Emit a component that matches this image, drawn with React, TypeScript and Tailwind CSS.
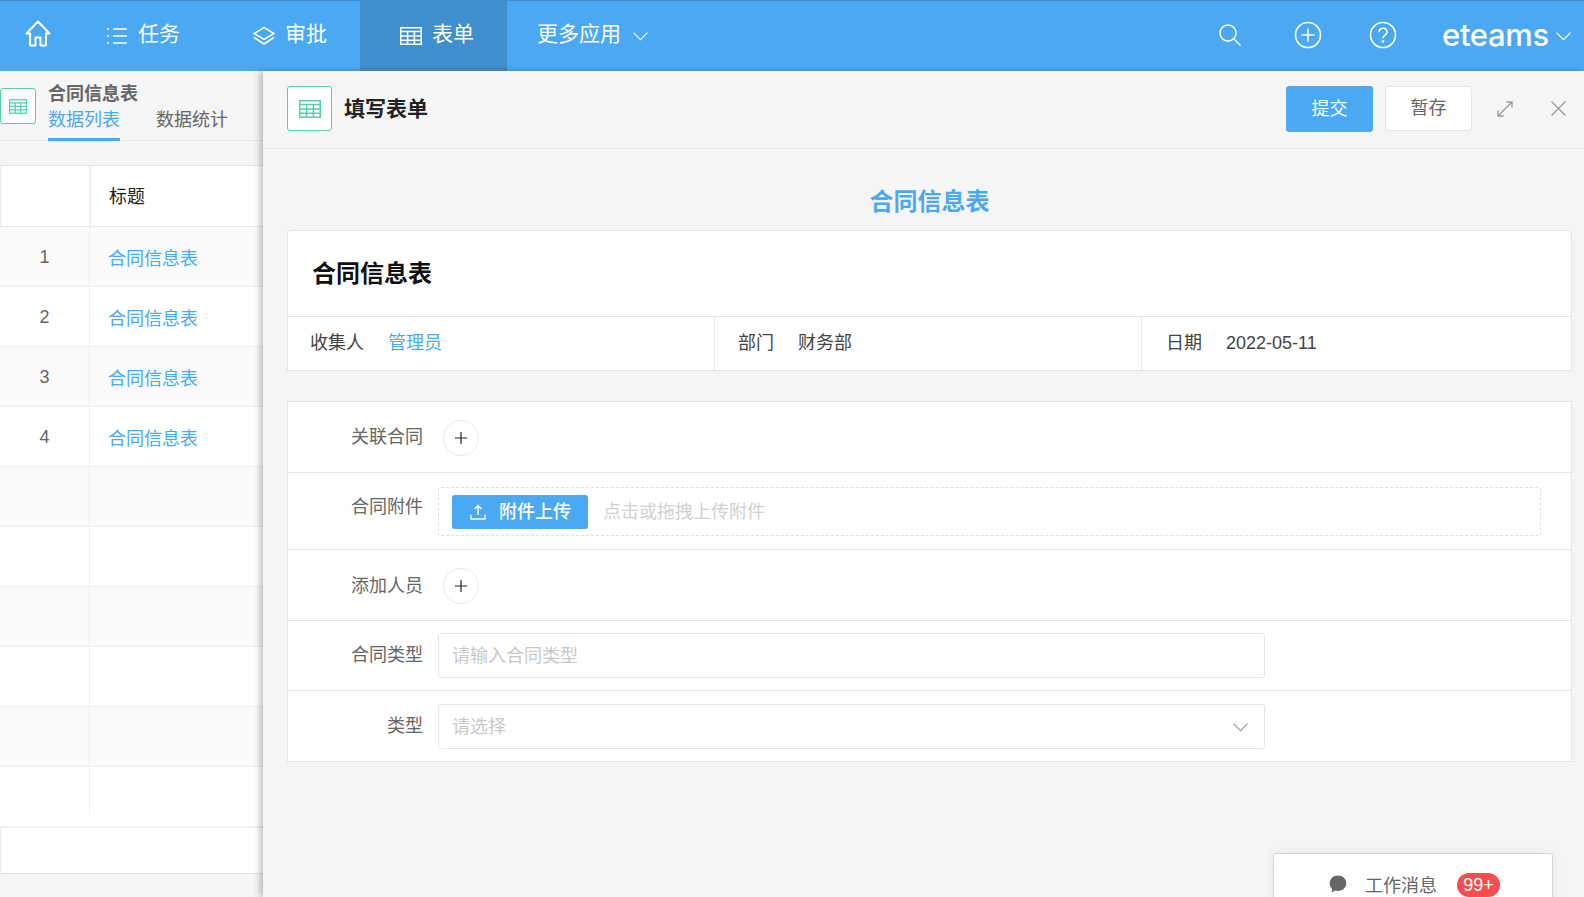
const font = { fontFamily: '"Liberation Sans", "Noto Sans CJK SC", sans-serif' };

function TableIcon({ className }: { className?: string }) {
  return (
    <svg viewBox="0 0 22 18" className={className} fill="none" stroke="currentColor" strokeWidth="1.5">
      <rect x="0.75" y="0.75" width="20.5" height="16.5" />
      <path d="M0.75 4.5h20.5M0.75 8.9h20.5M0.75 13.2h20.5M7.6 4.5v12.7M14.4 4.5v12.7" />
    </svg>
  );
}

function Chevron({ className }: { className?: string }) {
  return (
    <svg viewBox="0 0 15 9" className={`h-[9px] w-[15px] ${className ?? ''}`} fill="none" stroke="currentColor" strokeWidth="1.200">
      <path d="m0.500 0.700 7 7 7-7" />
    </svg>
  );
}

function NavItem({ icon, label, active, className }: { icon: React.ReactNode; label: string; active?: boolean; className: string }) {
  return (
    <div className={`flex h-full items-center ${active ? 'bg-[#408fcc]' : ''} ${className}`}>
      {icon}
      <span className="pb-[4px] text-[21px] text-white">{label}</span>
    </div>
  );
}

function FormRow({ label, height, children }: { label: string; height: string; children: React.ReactNode }) {
  return (
    <div className={`flex border-b border-[#e5e5e5] last:border-b-0 ${height}`}>
      <div className="w-[135px] shrink-0 text-right text-[18px] text-[#666]">{label}</div>
      {children}
    </div>
  );
}

function AddButton() {
  return (
    <div className="ml-5 flex h-9 w-9 items-center justify-center rounded-full border border-[#e8e8e8] bg-white">
      <svg viewBox="0 0 12 12" className="h-3 w-3" stroke="#222" strokeWidth="1.2">
        <path d="M0 6h12M6 0v12" />
      </svg>
    </div>
  );
}

export default function App() {
  const rows = [1, 2, 3, 4, 0, 0, 0, 0, 0, 0];

  return (
    <div className="flex h-[897px] w-[1584px] flex-col overflow-hidden bg-[#f5f5f5]" style={font}>
      {/* top bar */}
      <header className="flex h-[71px] shrink-0 items-center border-t border-[#3f8fcf] bg-[#4ba9f4] text-white">
        <div className="-mt-[6px] flex w-[76px] justify-center">
          <svg viewBox="0 0 26 27" className="h-[27px] w-[26px]" fill="none" stroke="white" strokeWidth="2" strokeLinejoin="round">
            <path d="M1.5 13.5 13 1.5l11.5 12h-3.6v12h-5.4v-8h-5v8H5.100v-12z" />
          </svg>
        </div>
        <NavItem
          className="w-[172px] pl-[31px]"
          label="任务"
          icon={
            <svg viewBox="0 0 20 18" className="mr-[11px] h-[18px] w-[20px]" stroke="white" strokeWidth="1.4">
              <path d="M0 2h2M0 9h2M0 16h2M6 2h14M6 9h14M6 16h14" />
            </svg>
          }
        />
        <NavItem
          className="w-[112px]"
          label="审批"
          icon={
            <svg viewBox="0 0 22 20" className="mr-[10px] ml-[5px] h-[20px] w-[22px]" fill="none" stroke="white" strokeWidth="1.5">
              <path d="M11 1.500 21 7.500l-10 6-10-6zM1 11.500l10 6.500 10-6.500" />
            </svg>
          }
        />
        <NavItem
          active
          className="w-[147px] pl-[40px]"
          label="表单"
          icon={<TableIcon className="mr-[10px] h-[18px] w-[22px] text-white" />}
        />
        <div className="ml-[30px] flex items-center">
          <span className="pb-[4px] text-[21px]">更多应用</span>
          <Chevron className="ml-[12px]" />
        </div>
        <div className="ml-auto flex items-center">
          <svg viewBox="0 0 22 22" className="-mt-[2px] h-[22px] w-[22px]" fill="none" stroke="white" strokeWidth="1.500">
            <circle cx="9" cy="9" r="8" />
            <path d="m15 15 6.500 6.500" />
          </svg>
          <svg viewBox="0 0 28 28" className="-mt-[2px] ml-[53px] h-[28px] w-[28px]" fill="none" stroke="white" strokeWidth="1.600">
            <circle cx="14" cy="14" r="12.500" />
            <path d="M14 7.500v13M7.500 14h13" />
          </svg>
          <svg viewBox="0 0 28 28" className="-mt-[2px] ml-[47px] h-[28px] w-[28px]" fill="none" stroke="white" strokeWidth="1.600">
            <circle cx="14" cy="14" r="12.500" />
            <path d="M10 11.200c0-5.200 8-5.200 8 0 0 3-4 2.800-4 6" />
            <circle cx="14" cy="20.500" r="0.600" fill="white" />
          </svg>
          <span className="ml-[45px] -mt-[4px] w-[106px] whitespace-nowrap text-[31px] leading-none font-medium tracking-[-0.3px]" style={{ fontFamily: 'Inter, sans-serif' }}>
            eteams
          </span>
          <Chevron className="mr-[13px] ml-[8px]" />
        </div>
      </header>

      <div className="flex min-h-0 flex-1">
        {/* left list */}
        <aside className="w-[263px] shrink-0 overflow-hidden">
          <div className="flex h-[70px] w-[264px] border-b border-[#e5e5e5]">
            <div className="mt-[17px] flex h-[36px] w-[36px] items-center justify-center rounded-[3px] border border-[#52d0b0] bg-white">
              <TableIcon className="h-[15px] w-[18px] text-[#52d0b0]" />
            </div>
            <div className="ml-3 flex flex-col">
              <div className="mt-[11px] text-[18px] leading-6 font-bold text-[#666]">合同信息表</div>
              <div className="mt-[2px] flex gap-9 text-[18px] leading-6">
                <div className="h-[33px] border-b-[3px] border-[#4ba9f4] text-[#4ba9f4]">数据列表</div>
                <div className="text-[#666]">数据统计</div>
              </div>
            </div>
          </div>
          <div className="mt-[24px] w-[263px] border-t border-[#e5e5e5] bg-white">
            <div className="flex h-[61px] items-center border-b border-l border-b-[#e8e8e8] border-l-[#e8e8ee]">
              <div className="h-full w-[90px] border-r-2 border-[#efefef]" />
              <div className="pt-[2px] pl-[18px] text-[18px] text-[#222]">标题</div>
            </div>
            {rows.map((n, i) => (
              <div key={i} className={`flex h-[60px] items-start border-b border-[#efefef] last:border-b-0 ${i % 2 === 0 ? 'bg-[#fafafa]' : 'bg-white'}`}>
                <div className={`w-[90px] border-r border-[#efefef] pt-[2px] text-center text-[18px] leading-[56px] text-[#666] ${i === 9 ? 'h-[48px]' : 'h-full'}`}>
                  {n > 0 ? n : ''}
                </div>
                {n > 0 && <div className="pt-[4px] pl-[18px] text-[18px] leading-[56px] text-[#4ba9f4]">合同信息表</div>}
              </div>
            ))}
            <div className="h-[47px] border-t border-b border-l border-t-[#efefef] border-b-[#e2e2e2] border-l-[#e8e8ee]" />
          </div>
        </aside>

        {/* form panel */}
        <main className="relative z-10 min-w-0 flex-1 shadow-[-3px_0_6px_rgba(0,0,0,0.25)]">
          <div className="flex h-[78px] items-center border-b border-[#e5e5e5] pb-[2px] pl-[24px]">
            <div className="flex h-[45px] w-[45px] items-center justify-center rounded-[3px] border border-[#52d0b0] bg-white">
              <TableIcon className="h-[18px] w-[22px] text-[#52d0b0]" />
            </div>
            <div className="mt-[1px] ml-[12px] text-[21px] font-bold text-[#222]">填写表单</div>
            <div className="ml-auto flex h-[46px] w-[87px] items-center justify-center rounded-[3px] bg-[#4ba9f4] pt-[1px] text-[18px] text-white">提交</div>
            <div className="ml-[12px] flex h-[45px] w-[87px] items-center justify-center rounded-[3px] border border-[#e5e5e5] bg-white text-[18px] text-[#666]">暂存</div>
            <svg viewBox="0 0 16 16" className="ml-[25px] h-4 w-4" fill="none" stroke="#999" strokeWidth="1.300">
              <path d="M1.500 14.500 14.500 1.500M9.500 1h5.500v5.500M1 9.500V15h5.500" />
            </svg>
            <svg viewBox="0 0 15 15" className="mr-[18px] ml-[38px] h-[15px] w-[15px]" fill="none" stroke="#999" strokeWidth="1.300">
              <path d="m0.500 0.500 14 14M14.500 0.500l-14 14" />
            </svg>
          </div>

          <div className="pr-[12px] pl-[24px]">
            <div className="flex h-[81px] items-center justify-center pt-[25px] text-[24px] font-bold text-[#4ba9f4]">合同信息表</div>
            <div className="rounded-t-[4px] border border-[#e5e5e5] bg-white">
              <div className="flex h-[86px] items-center border-b border-[#e5e5e5] pt-[1px] pl-[24px] text-[24px] font-bold text-[#111]">合同信息表</div>
              <div className="grid h-[53px] grid-cols-[427px_427px_1fr] items-center text-[18px] text-[#444]">
                <div className="flex h-full items-center border-r border-[#e5e5e5] pl-[22px]">
                  收集人<span className="ml-6 text-[#4ba9f4]">管理员</span>
                </div>
                <div className="flex h-full items-center border-r border-[#e5e5e5] pl-[23px]">
                  部门<span className="ml-6">财务部</span>
                </div>
                <div className="flex h-full items-center pl-[24px]">
                  日期<span className="ml-6">2022-05-11</span>
                </div>
              </div>
            </div>

            <div className="mt-[30px] border border-[#e5e5e5] bg-white">
              <FormRow label="关联合同" height="h-[71px] items-center pt-[1px]">
                <AddButton />
              </FormRow>
              <FormRow label="合同附件" height="h-[77px] pt-[21px]">
                <div className="mt-[-7px] ml-[15px] flex h-[49px] w-[1103px] items-center rounded-[3px] border border-dashed border-[#e0e0e0] pl-[13px]">
                  <div className="flex h-[34px] w-[136px] items-center rounded-[3px] bg-[#4ba9f4] pt-[1px] pl-[18px] text-[18px] font-medium text-white">
                    <svg viewBox="0 0 16 16" className="mr-[13px] h-4 w-4" fill="none" stroke="white" strokeWidth="1.300">
                      <path d="M1 10.500V15h14v-4.500M8 11V1.500M4.500 5 8 1.500 11.500 5" />
                    </svg>
                    附件上传
                  </div>
                  <span className="ml-[15px] pt-[1px] text-[18px] text-[#d0d0d0]">点击或拖拽上传附件</span>
                </div>
              </FormRow>
              <FormRow label="添加人员" height="h-[71px] items-center pt-[2px]">
                <AddButton />
              </FormRow>
              <FormRow label="合同类型" height="h-[70px] items-center">
                <div className="ml-[15px] flex h-[45px] w-[827px] items-center rounded-[3px] border border-[#e5e5e5] pt-[2px] pl-[13px] text-[18px] text-[#c8c8c8]">请输入合同类型</div>
              </FormRow>
              <FormRow label="类型" height="h-[70px] items-center">
                <div className="ml-[15px] flex h-[45px] w-[827px] items-center justify-between rounded-[3px] border border-[#e5e5e5] pt-[2px] pr-[16px] pl-[13px] text-[18px] text-[#c8c8c8]">
                  请选择
                  <Chevron className="text-[#999]" />
                </div>
              </FormRow>
            </div>
          </div>

          <div className="absolute top-[782px] right-[31px] flex h-[60px] w-[280px] items-start rounded-t-[3px] border border-[#d5d5d5] bg-white pt-[19px] pl-[55px] shadow-[0_0_12px_rgba(0,0,0,0.06)]">
            <svg viewBox="0 0 18 18" className="mt-[2px] h-[18px] w-[18px]" fill="#666">
              <path d="M9 0.500c4.700 0 8.300 3.400 8.300 7.800S13.700 16 9 16c-1 0-1.900-.1-2.700-.4L2.500 17.600l.8-3.500C1.600 12.700.700 10.700.700 8.300.700 3.900 4.300.500 9 .500z" />
            </svg>
            <span className="ml-[18px] pt-[2px] text-[18px] leading-[22px] text-[#666]">工作消息</span>
            <span className="ml-[20px] flex h-[24px] w-[43px] items-center justify-center rounded-full bg-[#f64e4e] text-[18px] text-white">99+</span>
          </div>
        </main>
      </div>
    </div>
  );
}
